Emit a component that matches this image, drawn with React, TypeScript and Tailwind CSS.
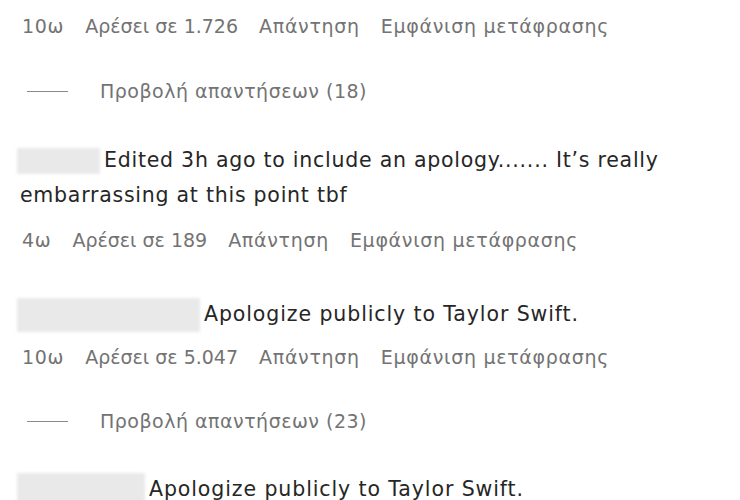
const Meta = ({ age, likes }: { age: string; likes: string }) => (
  <div className="flex h-[30px] items-center gap-[21px] pl-[22px] text-[19px] tracking-[0.7px] text-[#737373]">
    <span>{age}</span>
    <span className="tracking-normal">Αρέσει σε {likes}</span>
    <span>Απάντηση</span>
    <span>Εμφάνιση μετάφρασης</span>
  </div>
);

const Replies = ({ count, className }: { count: number; className: string }) => (
  <div className={"flex h-[30px] items-center text-[19px] tracking-[0.5px] text-[#737373] " + className}>
    <span className="ml-[27px] mr-[32px] h-px w-[41px] bg-[#8a8a8a]" />
    <span>Προβολή απαντήσεων ({count})</span>
  </div>
);

const Blur = ({ w, h }: { w: string; h: string }) => (
  <span
    className={
      "mr-[4px] -ml-[3px] inline-block align-middle bg-[#e9e9e9] blur-[1.5px] " + w + " " + h
    }
  />
);

export default function App() {
  return (
    <div className="h-[500px] w-[740px] overflow-hidden bg-white font-['DejaVu_Sans',sans-serif]">
      <div className="pt-[11px]">
        <Meta age="10ω" likes="1.726" />
      </div>
      <Replies count={18} className="mt-[35px]" />

      <div className="mt-[37px] pl-[20px] pr-[40px] text-[20.5px] leading-[35px] tracking-[0.75px] text-[#262626]">
        <Blur w="w-[83px]" h="h-[26px]" />
        Edited 3h ago to include an apology....... It’s really embarrassing at this point tbf
      </div>
      <div className="mt-[12px]">
        <Meta age="4ω" likes="189" />
      </div>

      <div className="mt-[42px] pl-[20px] text-[20.5px] leading-[35px] tracking-[0.9px] text-[#262626]">
        <Blur w="w-[183px]" h="h-[34px]" />
        Apologize publicly to Taylor Swift.
      </div>
      <div className="mt-[10px]">
        <Meta age="10ω" likes="5.047" />
      </div>
      <Replies count={23} className="mt-[34px]" />

      <div className="mt-[36px] pl-[20px] text-[20.5px] leading-[35px] tracking-[0.9px] text-[#262626]">
        <Blur w="w-[128px]" h="h-[34px]" />
        Apologize publicly to Taylor Swift.
      </div>
    </div>
  );
}
